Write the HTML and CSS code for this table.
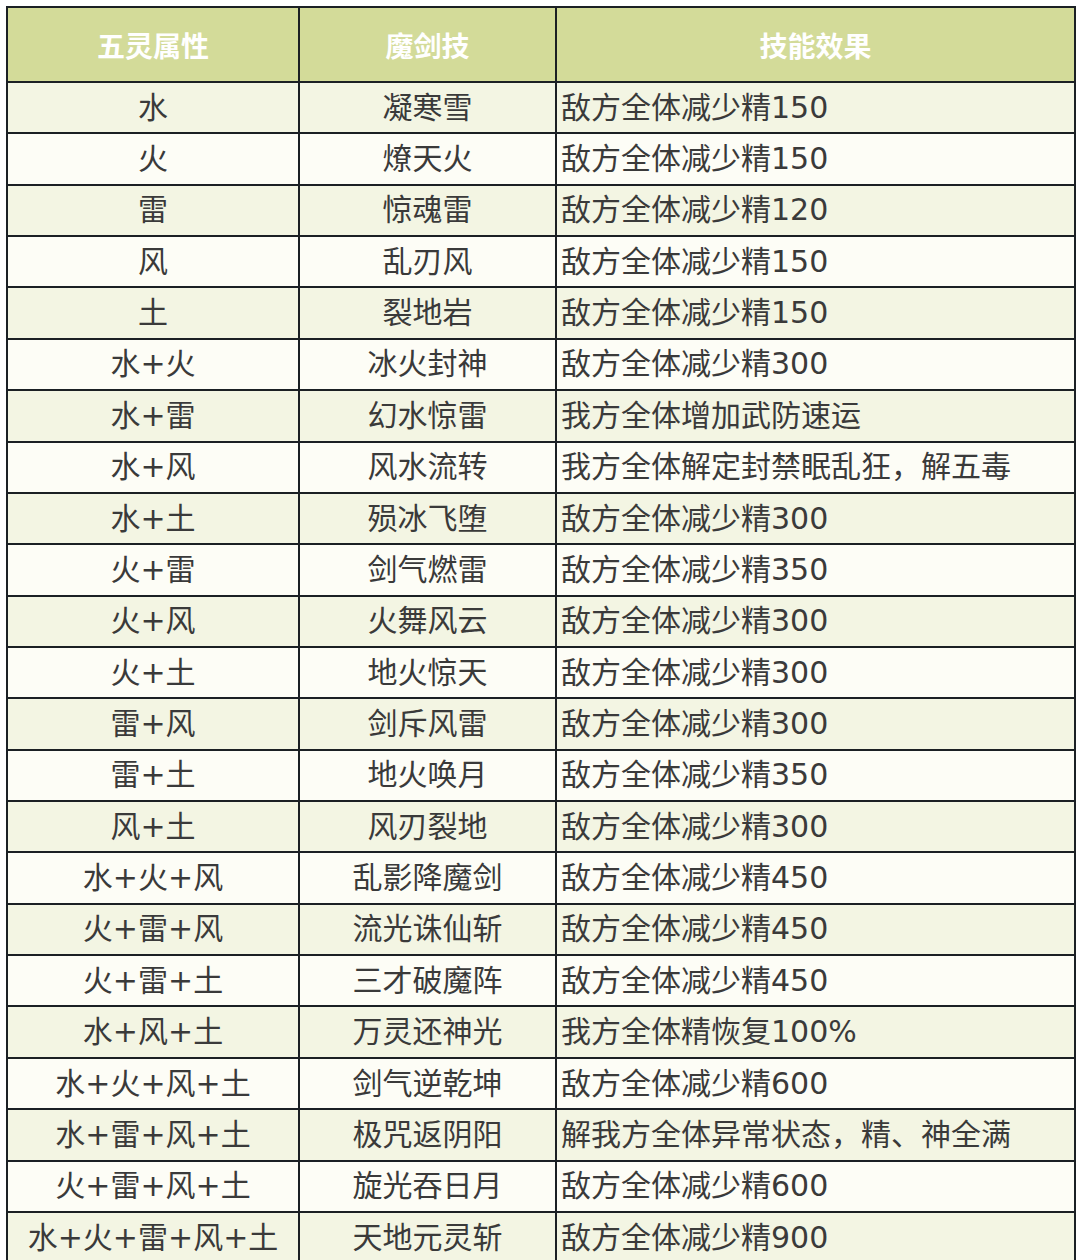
FILE: index.html
```html
<!DOCTYPE html>
<html lang="zh-CN">
<head>
<meta charset="utf-8">
<title>五灵属性 魔剑技</title>
<link rel="stylesheet" href="styles.css">
</head>
<body>
<table class="skills">
  <colgroup>
    <col class="c-attr">
    <col class="c-name">
    <col class="c-effect">
  </colgroup>
  <thead>
    <tr><th>五灵属性</th><th>魔剑技</th><th>技能效果</th></tr>
  </thead>
  <tbody>
    <tr><td>水</td><td>凝寒雪</td><td class="eff">敌方全体减少精150</td></tr>
    <tr><td>火</td><td>燎天火</td><td class="eff">敌方全体减少精150</td></tr>
    <tr><td>雷</td><td>惊魂雷</td><td class="eff">敌方全体减少精120</td></tr>
    <tr><td>风</td><td>乱刃风</td><td class="eff">敌方全体减少精150</td></tr>
    <tr><td>土</td><td>裂地岩</td><td class="eff">敌方全体减少精150</td></tr>
    <tr><td>水+火</td><td>冰火封神</td><td class="eff">敌方全体减少精300</td></tr>
    <tr><td>水+雷</td><td>幻水惊雷</td><td class="eff">我方全体增加武防速运</td></tr>
    <tr><td>水+风</td><td>风水流转</td><td class="eff">我方全体解定封禁眠乱狂，解五毒</td></tr>
    <tr><td>水+土</td><td>殒冰飞堕</td><td class="eff">敌方全体减少精300</td></tr>
    <tr><td>火+雷</td><td>剑气燃雷</td><td class="eff">敌方全体减少精350</td></tr>
    <tr><td>火+风</td><td>火舞风云</td><td class="eff">敌方全体减少精300</td></tr>
    <tr><td>火+土</td><td>地火惊天</td><td class="eff">敌方全体减少精300</td></tr>
    <tr><td>雷+风</td><td>剑斥风雷</td><td class="eff">敌方全体减少精300</td></tr>
    <tr><td>雷+土</td><td>地火唤月</td><td class="eff">敌方全体减少精350</td></tr>
    <tr><td>风+土</td><td>风刃裂地</td><td class="eff">敌方全体减少精300</td></tr>
    <tr><td>水+火+风</td><td>乱影降魔剑</td><td class="eff">敌方全体减少精450</td></tr>
    <tr><td>火+雷+风</td><td>流光诛仙斩</td><td class="eff">敌方全体减少精450</td></tr>
    <tr><td>火+雷+土</td><td>三才破魔阵</td><td class="eff">敌方全体减少精450</td></tr>
    <tr><td>水+风+土</td><td>万灵还神光</td><td class="eff">我方全体精恢复100%</td></tr>
    <tr><td>水+火+风+土</td><td>剑气逆乾坤</td><td class="eff">敌方全体减少精600</td></tr>
    <tr><td>水+雷+风+土</td><td>极咒返阴阳</td><td class="eff">解我方全体异常状态，精、神全满</td></tr>
    <tr><td>火+雷+风+土</td><td>旋光吞日月</td><td class="eff">敌方全体减少精600</td></tr>
    <tr><td>水+火+雷+风+土</td><td>天地元灵斩</td><td class="eff">敌方全体减少精900</td></tr>
  </tbody>
</table>
</body>
</html>
```

FILE: styles.css
```css
html, body {
  margin: 0;
  padding: 0;
  background: #ffffff;
}

body {
  padding: 6px 0 0 6px;
  font-family: "DejaVu Sans", "Noto Sans CJK SC", sans-serif;
  color: #3a3a3a;
}

.skills {
  border-collapse: collapse;
  table-layout: fixed;
  width: 1068px;
}

.c-attr { width: 292px; }
.c-name { width: 257px; }
.c-effect { width: 519px; }

.skills th,
.skills td {
  border: 2px solid #1b2024;
  padding: 0;
  text-align: center;
  vertical-align: middle;
  white-space: nowrap;
  overflow: hidden;
}

.skills th {
  height: 73px;
  background: #d3db99;
  color: #ffffff;
  font-family: "Noto Sans CJK SC", sans-serif;
  font-size: 28px;
  font-weight: 700;
}

.skills td {
  height: 49.36px;
  font-size: 30px;
  line-height: 40px;
  font-weight: 400;
}

.skills td.eff {
  text-align: left;
  padding-left: 4px;
}

.skills tbody tr:nth-child(odd) td {
  background: #f3f5e3;
}

.skills tbody tr:nth-child(even) td {
  background: #fdfdf6;
}
```
